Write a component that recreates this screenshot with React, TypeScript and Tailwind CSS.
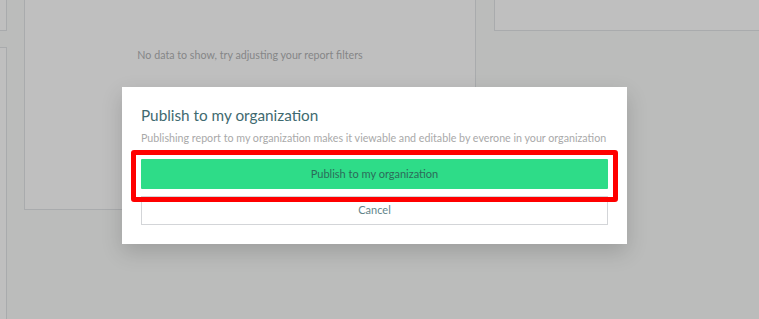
import React from 'react';

const font = { fontFamily: 'Lato, "Open Sans", sans-serif' };

function Card({ className }: { className: string }) {
    return <div className={`border border-[#a9abad] bg-[#bfbfbf] ${className}`} />;
}

export default function App() {
    return (
        <div className="relative w-[759px] h-[319px] overflow-hidden bg-[#bbbcbb]" style={font}>
            {/* page behind the overlay */}
            <div className="flex gap-[17px] ml-[-200px] mt-[-200px]">
                <div className="flex flex-col gap-[16px] w-[207px] shrink-0">
                    <Card className="h-[231px]" />
                    <Card className="h-[400px]" />
                </div>
                <div className="flex flex-col items-center w-[452px] h-[410px] shrink-0 border border-[#a9abad] bg-[#bfbfbf]">
                    <p className="mt-[246px] text-[10.7px] text-[#858687]">
                        No data to show, try adjusting your report filters
                    </p>
                </div>
                <Card className="w-[400px] h-[231px] ml-[1px] shrink-0" />
            </div>

            {/* modal */}
            <div className="absolute inset-0 flex items-start pl-[122px] pt-[87px]">
                <div className="relative w-[505px] bg-white px-[19px] pt-[17px] pb-[19px] shadow-[0_8px_20px_rgba(0,0,0,0.16)]">
                    <h2 className="text-[15.3px] leading-[22px] text-[#3f6a70]">Publish to my organization</h2>
                    <p className="mt-[4px] text-[10.7px] leading-[16px] text-[#a9a9a9] whitespace-nowrap">
                        Publishing report to my organization makes it viewable and editable by everone in your organization
                    </p>
                    <button className="mt-[13px] w-full h-[30px] bg-[#2edc88] text-[11px] text-[#2c6b5a] rounded-[1px]">
                        Publish to my organization
                    </button>
                    <button className="mt-[7px] w-full h-[29px] border border-[#d3d5d8] bg-white text-[11px] text-[#62858a]">
                        Cancel
                    </button>

                    <div className="absolute left-[9px] top-[63px] w-[487px] h-[52px] border-[5px] border-[#ff0000] rounded-[3px]" />
                </div>
            </div>
        </div>
    );
}
